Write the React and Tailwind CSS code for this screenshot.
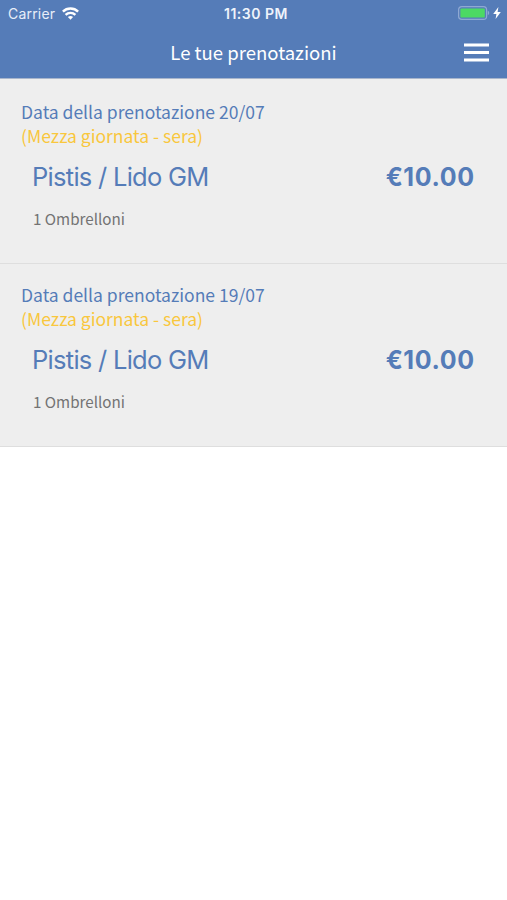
const bookings = [
  { id: 1, date: '20/07', slot: 'Mezza giornata - sera', place: 'Pistis / Lido GM', price: '€10.00', items: '1 Ombrelloni' },
  { id: 2, date: '19/07', slot: 'Mezza giornata - sera', place: 'Pistis / Lido GM', price: '€10.00', items: '1 Ombrelloni' },
];

function StatusBar() {
  return (
    <div className="grid grid-cols-3 items-center h-[27px] pl-[8px] pr-[6px] font-['Inter',sans-serif]">
      <div className="flex items-center gap-[7px]">
        <span className="text-[14px] leading-[20px] tracking-[0.2px] text-[#e8eef8]">Carrier</span>
        <svg width="17" height="13" viewBox="0 0 17 13" fill="none" stroke="currentColor" strokeWidth="2.4">
          <path d="M0.9 4.7a10.8 10.8 0 0 1 15.2 0" />
          <path d="M3.6 7.9a7 7 0 0 1 9.8 0" />
          <path d="M8.5 12.8L5.9 10.1a3.8 3.8 0 0 1 5.2 0z" fill="currentColor" stroke="none" />
        </svg>
      </div>
      <span className="pl-[3px] text-[14px] leading-[20px] font-semibold text-center tracking-[0.5px] text-[#eef3fb]">11:30 PM</span>
      <div className="flex items-center justify-end gap-[3px] pb-px">
        <svg width="32" height="14" viewBox="0 0 32 14" fill="none">
          <rect x="0.6" y="0.6" width="28" height="12.8" rx="3.2" stroke="#8fa9d3" strokeWidth="1.2" />
          <rect x="2.4" y="2.4" width="24.4" height="9.2" rx="1.2" fill="#4cd964" />
          <path d="M29.8 4.8a2.4 2.4 0 0 1 0 4.4z" fill="#8fa9d3" />
        </svg>
        <svg width="8" height="12" viewBox="0 0 8 12" fill="currentColor">
          <path d="M5.4 0L0.2 7h3.2L2.6 12L7.8 5H4.6z" />
        </svg>
      </div>
    </div>
  );
}

function Header({ title }) {
  return (
    <header className="h-[79px] bg-[#557cb8] text-white border-b border-[#a9b6cc]">
      <StatusBar />
      <div className="grid grid-cols-[43px_1fr_43px] items-center h-[51px]">
        <h1 className="col-start-2 pb-[2px] text-center text-[18.55px] leading-[26px]">{title}</h1>
        <button type="button" aria-label="Menu">
          <svg width="25" height="19" viewBox="0 0 25 19" stroke="currentColor" strokeWidth="3" className="block">
            <path d="M0 2h25M0 9.5h25M0 17h25" />
          </svg>
        </button>
      </div>
    </header>
  );
}

function BookingRow({ booking }) {
  return (
    <li className="h-[183px] pt-[19px] first:h-[185px] first:pt-[21px] pl-[21px] pr-[33px] bg-[#eeeeee] border-b border-[#dedede]">
      <p className="text-[17.5px] leading-[24px] text-[#557cb8]">Data della prenotazione {booking.date}</p>
      <p className="text-[17.5px] leading-[24px] text-[#f9c73d]">({booking.slot})</p>
      <div className="flex items-center justify-between pl-[11px] mt-[13px] text-[#557cb8] font-['Inter',sans-serif]">
        <span className="text-[25.5px] leading-[32px] tracking-[-0.72px]">{booking.place}</span>
        <span className="text-[25px] leading-[32px] font-bold tracking-[0.6px] -mr-[0.6px]">{booking.price}</span>
      </div>
      <p className="pl-[12px] mt-[13px] text-[15.2px] leading-[24px] text-[#737373]">{booking.items}</p>
    </li>
  );
}

export default function App() {
  return (
    <div className="w-full min-h-screen bg-white font-['Noto_Sans_CJK_JP',sans-serif]">
      <Header title="Le tue prenotazioni" />
      <ul>
        {bookings.map((booking) => (
          <BookingRow key={booking.id} booking={booking} />
        ))}
      </ul>
    </div>
  );
}
